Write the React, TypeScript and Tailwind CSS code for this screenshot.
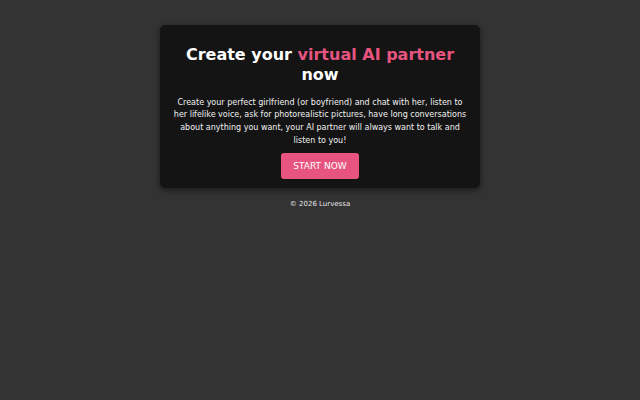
export default function App() {
  return (
    <div className="min-h-screen bg-[#333333] font-['DejaVu_Sans',sans-serif] text-white flex flex-col items-center pt-[25px]">
      <div className="w-[320px] bg-[#141414] rounded-[5px] shadow-[0_2px_6px_rgba(0,0,0,0.5)] px-3 pt-[20px] pb-[9px] text-center">
        <h1 className="text-[16px] leading-[20px] font-bold">
          Create your <span className="text-[#e75480]">virtual AI partner</span> now
        </h1>
        <p className="mt-[11.5px] text-[8px] leading-[12.7px] text-[#f2f2f2]">
          Create your perfect girlfriend (or boyfriend) and chat with her, listen to her lifelike voice, ask for photorealistic pictures, have long conversations about anything you want, your AI partner will always want to talk and listen to you!
        </p>
        <button className="mt-[6px] w-[78px] h-[26px] rounded-[3px] bg-[#e75480] text-[9px] text-white">
          START NOW
        </button>
      </div>
      <p className="mt-[11px] text-[7px] leading-[10px] text-[#e5e5e5]">© 2026 Lurvessa</p>
    </div>
  );
}
